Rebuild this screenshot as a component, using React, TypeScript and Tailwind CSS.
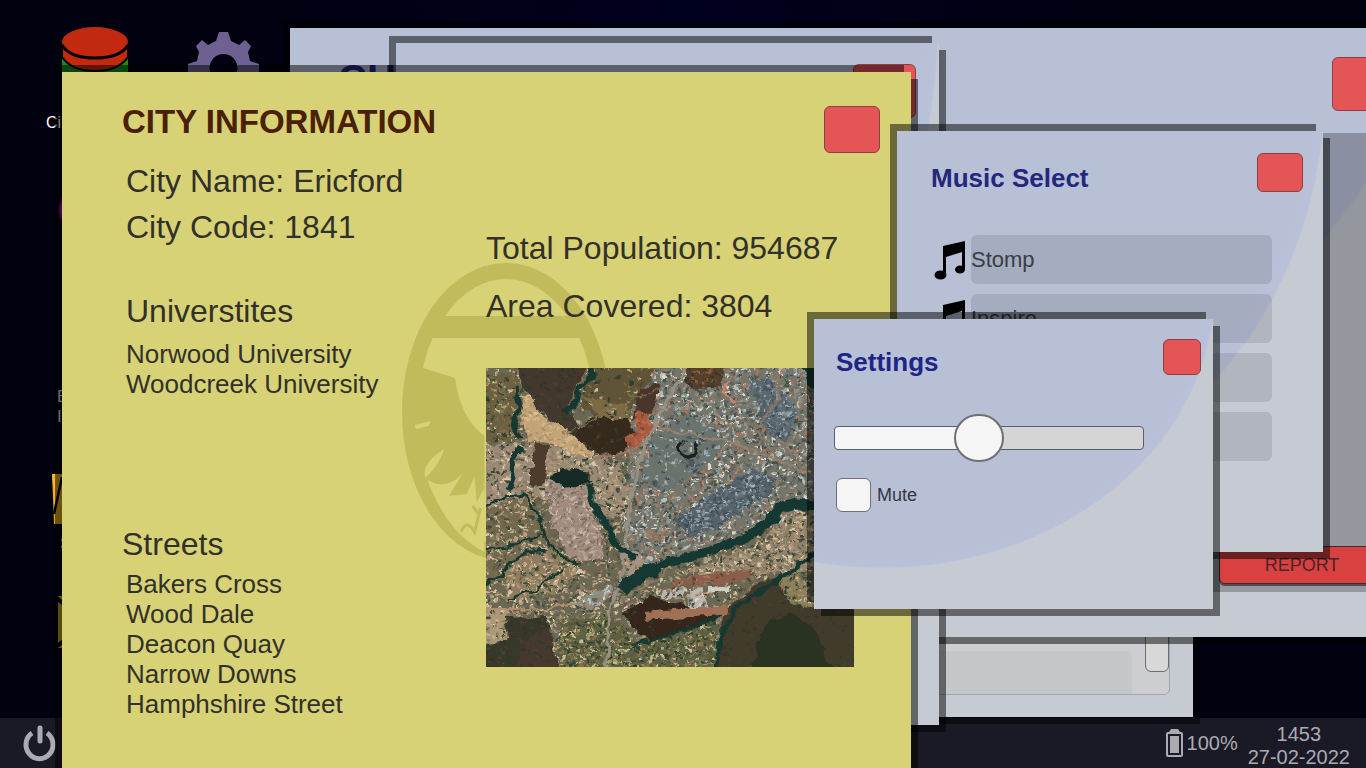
import { useState, type CSSProperties, type ReactNode } from "react";

type Point = [number, number];

interface District {
  points: Point[];
  base: string;
  specks?: string[];
  density?: number;
  size?: number;
}

const UNIVERSITIES = ["Norwood University", "Woodcreek University"];
const STREETS = ["Bakers Cross", "Wood Dale", "Deacon Quay", "Narrow Downs", "Hamphshire Street"];
const TRACKS = ["Stomp", "Inspire", "", ""];

const TAN = ["#c3b08f", "#d8c8a8", "#5d5847", "#857b62", "#3a4a3a", "#b59478"];
const GREY = ["#b9bdb9", "#d6d8d2", "#5c625f", "#8d9590", "#a8775a", "#43514b"];
const SLATE = ["#8b98a0", "#a9b2b5", "#3f4c55", "#66747c", "#4b5a62"];
const PINK = ["#b9a195", "#c8b4a6", "#7d6c60", "#a58a7c"];
const FARM = ["#a89c6c", "#c6bd93", "#3f4a34", "#6f7048", "#2c3f31", "#8b6f4c"];
const SOIL = ["#4c4032", "#3a3026", "#2f3a2c"];

const DISTRICTS: District[] = [
  { points: [[-10, -10], [378, -10], [378, 309], [-10, 309]], base: "#6b6752", specks: TAN, density: 0.6 },
  { points: [[150, -10], [378, -10], [378, 150], [280, 160], [200, 190], [135, 200], [140, 120]], base: "#74756a", specks: GREY, density: 0.7 },
  { points: [[165, 70], [200, 45], [240, 70], [225, 95], [180, 125], [155, 110]], base: "#6a736c", specks: SLATE, density: 0.3 },
  { points: [[-10, 6], [34, 8], [30, 40], [36, 74], [-10, 76]], base: "#6d5f42", specks: FARM, density: 0.4 },
  { points: [[-10, 78], [50, 74], [130, 92], [145, 120], [140, 150], [110, 150], [60, 130], [-10, 138]], base: "#9a8a74", specks: TAN, density: 0.6 },
  { points: [[28, -10], [106, -10], [88, 22], [82, 42], [96, 60], [90, 70], [72, 60], [56, 44], [40, 24]], base: "#42382d", specks: SOIL, density: 0.2 },
  { points: [[106, -10], [178, -10], [158, 22], [140, 52], [112, 52], [94, 36]], base: "#5e5238", specks: FARM, density: 0.2 },
  { points: [[96, 26], [112, 32], [140, 36], [142, 50], [114, 50]], base: "#7b6a45", specks: FARM, density: 0.2 },
  { points: [[104, 50], [142, 50], [150, 68], [138, 84], [112, 88], [88, 68]], base: "#36291f", specks: SOIL, density: 0.1 },
  { points: [[154, 20], [174, 16], [166, 46], [146, 52]], base: "#49352b" },
  { points: [[150, 42], [162, 44], [166, 58], [154, 76], [140, 80], [139, 68], [150, 64]], base: "#a65a3f", specks: ["#c06a48", "#7f4534"], density: 0.4 },
  { points: [[36, 26], [50, 32], [56, 50], [76, 58], [94, 72], [109, 88], [98, 89], [66, 76], [42, 72], [36, 50]], base: "#c2a478", specks: ["#e0c18e", "#a78c66", "#d7b58a"], density: 0.4 },
  { points: [[50, 75], [63, 77], [60, 100], [56, 118], [43, 117]], base: "#4d3b2d" },
  { points: [[60, 112], [78, 114], [100, 122], [104, 142], [118, 170], [115, 190], [95, 192], [80, 184], [64, 152]], base: "#9f8c80", specks: PINK, density: 0.9 },
  { points: [[188, 152], [265, 100], [290, 110], [280, 130], [215, 168], [205, 171]], base: "#56626a", specks: SLATE, density: 1 },
  { points: [[262, 8], [290, 14], [312, 44], [300, 72], [282, 66], [270, 40]], base: "#5c6870", specks: SLATE, density: 0.7 },
  { points: [[202, -10], [240, -10], [236, 18], [206, 22], [198, 16]], base: "#54412f", specks: ["#8f5e42", "#34362a"], density: 0.3 },
  { points: [[190, 204], [262, 180], [287, 163], [300, 145], [325, 142], [378, 180], [315, 205], [270, 208], [230, 206]], base: "#92846c", specks: TAN, density: 0.9 },
  { points: [[-10, 140], [42, 128], [60, 160], [78, 190], [40, 215], [-10, 222]], base: "#73694f", specks: TAN, density: 0.5 },
  { points: [[20, 195], [70, 180], [95, 200], [70, 225], [20, 235]], base: "#8e7c5d", specks: TAN, density: 0.6 },
  { points: [[134, 188], [150, 182], [160, 194], [152, 204], [136, 208]], base: "#a3937f", specks: TAN, density: 0.5 },
  { points: [[84, 236], [122, 216], [128, 222], [116, 236], [92, 243]], base: "#8f8b7c", specks: GREY, density: 0.7 },
  { points: [[-10, 240], [22, 240], [24, 272], [-10, 276]], base: "#aa9878", specks: TAN, density: 0.5 },
  { points: [[20, 250], [60, 248], [72, 309], [-10, 309], [-10, 278], [22, 272]], base: "#37372a", specks: SOIL, density: 0.3 },
  { points: [[36, 274], [64, 260], [74, 309], [30, 309]], base: "#45382d", specks: SOIL, density: 0.2 },
  { points: [[74, 252], [126, 246], [152, 276], [232, 252], [228, 309], [72, 309]], base: "#5c5f43", specks: FARM, density: 0.8 },
  { points: [[136, 244], [166, 228], [182, 234], [240, 244], [232, 252], [186, 266], [168, 274], [152, 266]], base: "#35271f", specks: SOIL, density: 0.1 },
  { points: [[238, 244], [272, 214], [296, 208], [312, 232], [340, 240], [378, 240], [378, 309], [226, 309]], base: "#403a2c", specks: SOIL, density: 0.1 },
  { points: [[276, 262], [292, 248], [310, 246], [330, 264], [350, 309], [264, 309]], base: "#2a3324" },
  { points: [[290, 212], [312, 205], [328, 240], [308, 238]], base: "#8d7e5b", specks: FARM, density: 0.6 },
  { points: [[184, 212], [266, 200], [264, 212], [186, 221]], base: "#8b5f4b", specks: ["#a97860", "#5e4638"], density: 0.3 },
  { points: [[158, 244], [214, 238], [244, 238], [240, 247], [160, 252]], base: "#a06f57" },
  { points: [[176, 222], [198, 220], [198, 230], [172, 230]], base: "#b8b4a8", specks: GREY, density: 0.8 },
  { points: [[203, 221], [218, 220], [222, 240], [204, 240]], base: "#bdb6ab", specks: GREY, density: 0.5 },
  { points: [[222, 219], [243, 217], [243, 223], [222, 225]], base: "#cfccc2" },
  { points: [[62, 110], [76, 100], [90, 101], [106, 112], [92, 118], [78, 119]], base: "#142b27" },
];

const ROADS = [
  { d: "M205 -10 L178 38 L160 72 L146 120 L141 166 L134 216 L124 240 L120 309", stroke: "#979183", width: 3 },
  { d: "M108 90 Q140 88 158 74", stroke: "#9a7560", width: 2 },
  { d: "M-10 242 L60 240 L96 236", stroke: "#b48e70", width: 2 },
  { d: "M134 232 L180 206 L186 172", stroke: "#8d7c62", width: 2 },
  { d: "M170 60 L240 72 L300 95 L328 108", stroke: "#98806a", width: 2 },
  { d: "M290 -10 L292 30 L270 62 L290 90", stroke: "#8c7663", width: 2 },
  { d: "M245 12 Q234 20 240 30 L252 34", stroke: "#d0836a", width: 2 },
  { d: "M76 66 L95 60 L120 44 L174 20", stroke: "#857655", width: 1 },
];

const STREAMS = [
  { d: "M103 -10 L108 8 L92 20 L88 38 L78 44", width: 5 },
  { d: "M30 18 L33 40 L28 58 L34 72", width: 5 },
  { d: "M34 78 L27 92 L28 108 L22 122", width: 5 },
  { d: "M104 114 L106 132 L114 150 L124 160 L130 178 L150 190", width: 6 },
  { d: "M-10 142 L20 128 L38 126 L50 144 L58 166 L72 186 L90 196", width: 3 },
  { d: "M-10 186 L30 176 L58 166", width: 2 },
  { d: "M-10 220 L18 206 L22 196 L42 184 L62 182", width: 3 },
  { d: "M22 232 L50 222 L76 202", width: 2 },
  { d: "M136 222 L150 210 L172 198", width: 14 },
  { d: "M168 198 L212 187 L238 178 L266 168", width: 9 },
  { d: "M262 168 L282 156 L294 140 L310 136 L330 138", width: 11 },
  { d: "M228 309 L234 272 L250 240 L284 216 L310 200 L328 186", width: 4 },
  { d: "M152 276 L186 266 L236 248", width: 3 },
];

// small seeded generator so the map comes out the same on every render
function createRandom(seed: number) {
  let s = seed;
  return () => {
    s = (s * 1664525 + 1013904223) % 4294967296;
    return s / 4294967296;
  };
}

function speckPaths(district: District, seed: number) {
  const { points, specks = [], density = 0, size = 2.4 } = district;
  if (specks.length === 0) return [];
  const random = createRandom(seed);
  const xs = points.map((p) => p[0]);
  const ys = points.map((p) => p[1]);
  const x0 = Math.min(...xs);
  const y0 = Math.min(...ys);
  const w = Math.max(...xs) - x0;
  const h = Math.max(...ys) - y0;
  const count = Math.round((w * h * density) / 7);
  const paths = specks.map(() => "");
  for (let i = 0; i < count; i++) {
    const x = (x0 + random() * w).toFixed(1);
    const y = (y0 + random() * h).toFixed(1);
    const sw = (size * (0.6 + random())).toFixed(1);
    const sh = (size * (0.5 + random() * 0.8)).toFixed(1);
    paths[Math.floor(random() * specks.length)] += `M${x} ${y}h${sw}v${sh}h-${sw}z`;
  }
  return paths;
}

function SatelliteMap() {
  return (
    <svg viewBox="0 0 368 299" className="block w-full" role="img" aria-label="Satellite map">
      <defs>
        <filter id="rough" x="0" y="0" width="100%" height="100%">
          <feTurbulence type="fractalNoise" baseFrequency="0.09" numOctaves="3" seed="4" result="n" />
          <feDisplacementMap in="SourceGraphic" in2="n" scale="9" xChannelSelector="R" yChannelSelector="G" />
          <feGaussianBlur stdDeviation="0.75" />
        </filter>
        {DISTRICTS.map((d, i) => (
          <clipPath key={i} id={`district-${i}`}>
            <polygon points={d.points.join(" ")} />
          </clipPath>
        ))}
      </defs>
      <rect width="368" height="299" fill="#5a5745" />
      <g filter="url(#rough)">
        {DISTRICTS.map((d, i) => (
          <g key={i} clipPath={`url(#district-${i})`}>
            <polygon points={d.points.join(" ")} fill={d.base} />
            {speckPaths(d, i + 11).map((path, j) => (
              <path key={j} d={path} fill={d.specks?.[j]} />
            ))}
          </g>
        ))}
        {ROADS.map((r) => (
          <path key={r.d} d={r.d} fill="none" stroke={r.stroke} strokeWidth={r.width} />
        ))}
        {STREAMS.map((s) => (
          <path key={s.d} d={s.d} fill="none" stroke="#163730" strokeWidth={s.width} strokeLinejoin="round" />
        ))}
        <path d="M196 73 A9 9 0 1 0 208 74" fill="none" stroke="#1f2420" strokeWidth="4" />
        <path d="M308 -10 H378 V40 L326 20 Z" fill="#163a33" />
      </g>
    </svg>
  );
}

function Emblem() {
  return (
    <svg viewBox="0 0 212 300" preserveAspectRatio="none" className="h-[300px] w-[208px]" aria-hidden="true">
      <ellipse cx="106" cy="150" rx="98" ry="141" fill="none" stroke="#c1bb5c" strokeWidth="16" />
      <path d="M30 54 H182 L196 76 H18 Z" fill="#c1bb5c" />
      <path
        d="M15 104 L54 116 C58 142 66 160 84 174 V240 L70 262 L84 290 L40 262 L10 190 L6 140 Z"
        fill="#c1bb5c"
      />
      <path d="M13 163 L29 159 L27 164 L14 167 Z" fill="#d6d275" />
      <path d="M24 216 C20 205 30 195 43 187 C40 197 34 206 24 216 Z" fill="#d6d275" />
      <path d="M26 218 C40 226 52 222 62 211 L48 234 L66 232 L74 214 L76 240 L84 226 V290 C56 276 38 250 26 218 Z" fill="#d6d275" />
      <path d="M60 270 Q66 256 74 270 L80 246 M78 252 L72 244" fill="none" stroke="#c1bb5c" strokeWidth="3" />
    </svg>
  );
}

function MusicNote() {
  return (
    <svg viewBox="0 0 32 40" className="h-10 w-8 shrink-0" fill="#000">
      <path d="M9 6 L31 1 V30 H28 V12 L12 17 V35 H9 Z" />
      <ellipse cx="6.5" cy="35" rx="6" ry="4.500" />
      <ellipse cx="26" cy="29.500" rx="5" ry="4" />
    </svg>
  );
}

interface WindowProps {
  label: string;
  className: string;
  children?: ReactNode;
}

function DesktopWindow({ label, className, children }: WindowProps) {
  return (
    <section
      aria-label={label}
      className={`absolute shadow-[-7px_-7px_0_0_rgba(0,0,0,0.5),7px_7px_0_0_rgba(0,0,0,0.5)] ${className}`}
    >
      {children}
    </section>
  );
}

const BLUE_SURFACE =
  "bg-[#c6cad3] bg-[radial-gradient(83.5%_96%_at_17%_-10%,#b7c0d5_0%,#b7c0d5_92%,#b9c0d9_99.500%,#c6cad3_100%)]";

function CloseButton({ className }: { className: string }) {
  return (
    <button
      type="button"
      aria-label="Close"
      className={`shrink-0 rounded-md border border-[#8d3f45] bg-[#e45555] ${className}`}
    />
  );
}

function DesktopIcons() {
  return (
    <nav className="absolute top-0 left-0 h-full w-72 text-[17px] leading-5 text-neutral-300">
      <a href="#city" className="absolute top-[26px] left-[46px] flex flex-col gap-[19px] text-base text-white">
        <svg viewBox="0 0 66 66" className="ml-4 h-[66px] w-[66px]" aria-hidden="true">
          <path d="M0 28 V66 H66 V28 Z" fill="#1b8a1f" />
          <path d="M0 20 V31 Q10 45 33 45 Q56 45 66 31 V20 Z" fill="#c3290f" stroke="#000008" strokeWidth="2" />
          <ellipse cx="33" cy="16" rx="33" ry="15" fill="#c3290f" />
          <path d="M0 19 Q8 32 33 32 Q58 32 66 19" fill="none" stroke="#000008" strokeWidth="3" />
        </svg>
        Ci
      </a>
      <a href="#settings" aria-label="Settings" className="absolute top-8 left-[188px]">
        <svg viewBox="0 0 71 71" className="h-[71px] w-[71px]" aria-hidden="true">
          <path
            fillRule="evenodd"
            d="M31 0 H40 L43 9 L51 13 L57 8 L63 14 L60 20 L62 29 L71 32 V40 L62 43 L58 54 L62 60 L56 64 L48 60 L42 63 L41 71 H30 L28 63 L20 60 L14 64 L8 59 L12 52 L9 43 L0 40 V32 L9 29 L11 20 L8 14 L14 8 L20 13 L28 9 Z M35 22 A14 14 0 1 0 36 22 Z"
            fill="#6c6190"
          />
        </svg>
      </a>
      <span className="absolute top-[190px] left-[59px] h-10 w-10 rounded-full bg-[#a010a0] blur-[1px]" />
      <a href="#election" className="absolute top-[387px] left-[57px] flex flex-col">
        <span>E</span>
        <span>I</span>
      </a>
      <a href="#shop" className="absolute top-[474px] left-[52px] flex flex-col gap-2 text-base">
        <svg viewBox="0 0 40 50" className="h-[50px] w-10" aria-hidden="true">
          <path d="M0 0 H40 V50 H2 Z" fill="#d9a51c" />
          <path d="M0 0 H4 L3 34 Z" fill="#ffb437" />
          <path d="M10 3 L2 40" stroke="#000008" strokeWidth="2.500" />
        </svg>
        <span className="pl-2">S</span>
      </a>
      <svg viewBox="0 0 40 60" className="absolute top-[592px] left-[54px] h-[60px] w-10" aria-hidden="true">
        <path d="M3 4 H40 V56 H3 Z" fill="#b39a26" />
        <path d="M0 4 L20 20 M0 56 L20 42 M2 8 V54" stroke="#000008" strokeWidth="4" />
      </svg>
    </nav>
  );
}

function Taskbar() {
  return (
    <footer className="flex h-[50px] items-center justify-between bg-white/10 pr-4 pl-5 text-xl text-[#aaaab0]">
      <button type="button" aria-label="Power">
        <svg viewBox="0 0 40 40" className="h-10 w-10" fill="none" stroke="currentColor">
          <path d="M12 10 A13.500 14 0 1 0 27 10" strokeWidth="5" />
          <path d="M20 5 V18" strokeWidth="5" strokeLinecap="round" />
        </svg>
      </button>
      <div className="flex items-center gap-2.5">
        <div className="flex items-center gap-1">
          <svg viewBox="0 0 17 28" className="h-7 w-[17px]" fill="currentColor" aria-hidden="true">
            <path
              fillRule="evenodd"
              d="M5 0 H12 L14 3 H15 Q17 3 17 5 V26 Q17 28 15 28 H2 Q0 28 0 26 V5 Q0 3 2 3 H3 Z M2 5 V26 H15 V5 Z"
            />
            <path d="M4 7 H13 V24 H4 Z" />
          </svg>
          <span>100%</span>
        </div>
        <time className="flex flex-col pt-1.5 text-center leading-[23px]">
          <span>1453</span>
          <span>27-02-2022</span>
        </time>
      </div>
    </footer>
  );
}

function CityWindow() {
  return (
    <DesktopWindow label="City information" className="top-[72px] left-[62px] h-[720px] w-[849px] bg-[#d6d275]">
      <div className="absolute top-[190px] left-[340px]">
        <Emblem />
      </div>
      <div className="relative flex flex-col pr-[31px] pl-[60px] text-[32px] leading-[46px] text-[#33302a]">
        <header className="flex items-start justify-between pt-[34px]">
          <h1 className="text-[33px] leading-8 font-bold text-[#4a2106]">CITY INFORMATION</h1>
          <CloseButton className="h-[47px] w-[56px]" />
        </header>
        <div className="flex">
          <div className="w-[364px] pt-[5px]">
            <div className="pl-1">
              <p>City Name: Ericford</p>
              <p>City Code: 1841</p>
            </div>
            <h2 className="mt-[38px] pl-1">Universtites</h2>
            <ul className="h-[180px] pt-[5px] pl-1 text-[26px] leading-[30px]">
              {UNIVERSITIES.map((name) => (
                <li key={name}>{name}</li>
              ))}
            </ul>
            <h2 className="mt-[7px]">Streets</h2>
            <ul className="pt-0.5 pl-1 text-[26px] leading-[30px]">
              {STREETS.map((street) => (
                <li key={street}>{street}</li>
              ))}
            </ul>
          </div>
          <div className="w-[368px] pt-[66px]">
            <p className="leading-[58px]">Total Population: 954687</p>
            <p className="leading-[58px]">Area Covered: 3804</p>
            <div className="mt-[33px]">
              <SatelliteMap />
            </div>
          </div>
        </div>
      </div>
    </DesktopWindow>
  );
}

function MusicWindow() {
  return (
    <DesktopWindow
      label="Music select"
      className={`top-[131px] left-[897px] h-[421px] w-[426px] pt-[22px] pr-5 pl-[34px] ${BLUE_SURFACE}`}
    >
      <header className="flex items-start justify-between pb-[39px]">
        <h2 className="pt-[7px] text-[26px] leading-9 font-bold text-[#25277c]">Music Select</h2>
        <CloseButton className="h-[39px] w-[46px]" />
      </header>
      <ul className="flex flex-col gap-2.5 pl-[3px]">
        {TRACKS.map((track, i) => (
          <li key={i} className="flex h-[49px] items-center gap-[5px]">
            <MusicNote />
            <button
              type="button"
              aria-label={track || `Track ${i + 1}`}
              className="h-full w-[301px] rounded-md bg-black/10 text-left text-[22px] text-[#3a3d47]"
            >
              {track}
            </button>
          </li>
        ))}
      </ul>
    </DesktopWindow>
  );
}

function SettingsWindow() {
  const [volume, setVolume] = useState(46);
  const [muted, setMuted] = useState(false);

  return (
    <DesktopWindow
      label="Settings"
      className={`top-[319px] left-[814px] h-[290px] w-[399px] pt-5 pr-3 pl-5 ${BLUE_SURFACE}`}
    >
      <header className="flex items-start justify-between pb-[34px]">
        <h2 className="pt-[5px] pl-0.5 text-[26px] leading-9 font-bold text-[#1f2488]">Settings</h2>
        <CloseButton className="h-9 w-[38px]" />
      </header>
      <input
        type="range"
        aria-label="Volume"
        min={0}
        max={100}
        value={volume}
        onChange={(e) => setVolume(Number(e.target.value))}
        style={{ "--fill": `${volume}%` } as CSSProperties}
        className="block h-12 w-[310px] appearance-none bg-transparent [&::-webkit-slider-runnable-track]:h-6 [&::-webkit-slider-runnable-track]:rounded [&::-webkit-slider-runnable-track]:border [&::-webkit-slider-runnable-track]:border-[#5b5f6e] [&::-webkit-slider-runnable-track]:bg-[linear-gradient(to_right,#f5f5f5_var(--fill),#d5d5d5_var(--fill))] [&::-webkit-slider-thumb]:-mt-[13px] [&::-webkit-slider-thumb]:h-12 [&::-webkit-slider-thumb]:w-[50px] [&::-webkit-slider-thumb]:appearance-none [&::-webkit-slider-thumb]:rounded-full [&::-webkit-slider-thumb]:border-2 [&::-webkit-slider-thumb]:border-[#6f7075] [&::-webkit-slider-thumb]:bg-[#f5f5f5]"
      />
      <label className="mt-4 flex items-center gap-1.5 pl-0.5 text-lg text-[#33363f]">
        <input
          type="checkbox"
          checked={muted}
          onChange={(e) => setMuted(e.target.checked)}
          className="h-[34px] w-[35px] appearance-none rounded-md border border-[#6f7075] bg-[#f5f5f5] checked:bg-[#1f2488]"
        />
        Mute
      </label>
    </DesktopWindow>
  );
}

export default function App() {
  return (
    <div className="relative flex h-screen w-full flex-col justify-end overflow-hidden bg-[#01010f] bg-[radial-gradient(ellipse_at_50%_0%,#00001f_0%,#01010f_50%)] font-['Liberation_Sans',Arial,sans-serif]">
      <DesktopIcons />
      <Taskbar />

      <DesktopWindow
        label="Messages"
        className="top-[300px] left-[600px] flex h-[417px] w-[593px] flex-col bg-[#c6cad3] pt-12 pr-[23px] pb-[22px] pl-6"
      >
        <div className="flex flex-1 rounded-md border border-[#a4a6aa] bg-[#cdced2]">
          <div className="mt-[302px] mr-[13px] flex-1 rounded-t-md bg-[#c4c7ca]" />
          <div className="mb-[22px] w-6 rounded-md border border-[#6c6d70] bg-[#d8d8d8]" />
        </div>
      </DesktopWindow>

      <DesktopWindow label="Chat" className={`top-7 left-[290px] h-[609px] w-[1140px] ${BLUE_SURFACE}`}>
        <header className="flex h-[105px] items-start justify-between pt-[29px] pr-8 pl-12">
          <h2 className="text-[40px] leading-[44px] font-bold text-[#25277c]">CH</h2>
          <CloseButton className="h-[54px] w-[66px]" />
        </header>
        <div className="ml-12 flex h-[459px] flex-col items-end justify-end bg-black/25 pr-[45px] pb-2">
          <button
            type="button"
            className="h-[38px] w-[166px] rounded-md border border-[#4d2626] bg-[#d94141] text-lg text-[#4a2525] shadow-[0_2px_0_0_rgba(0,0,0,0.5)]"
          >
            REPORT
          </button>
        </div>
      </DesktopWindow>

      <DesktopWindow
        label="Details"
        className={`top-[43px] left-[396px] flex h-[682px] w-[543px] items-start justify-end pt-[21px] pr-[23px] ${BLUE_SURFACE}`}
      >
        <CloseButton className="h-[54px] w-[63px]" />
      </DesktopWindow>

      <CityWindow />
      <MusicWindow />
      <SettingsWindow />
    </div>
  );
}
